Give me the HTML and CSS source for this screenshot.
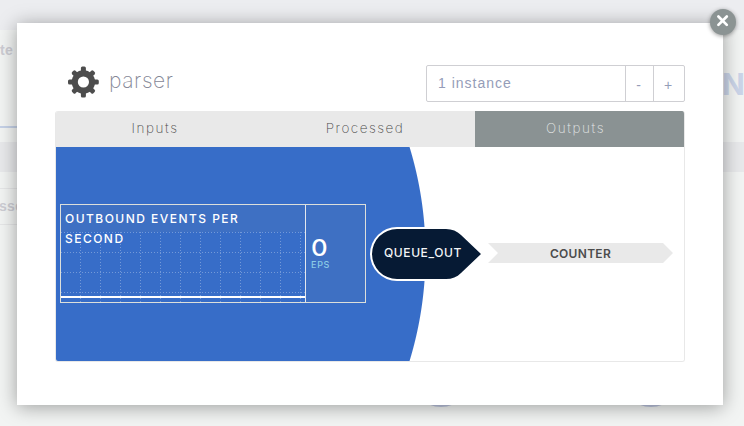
FILE: index.html
```
<!DOCTYPE html>
<html lang="en">
<head>
<meta charset="utf-8">
<title>parser</title>
<link rel="stylesheet" href="styles.css">
</head>
<body>
<div class="backdrop" aria-hidden="true">
  <div class="back-top"></div>
  <div class="back-row back-summary"><span class="back-label">te</span><span class="back-name">N</span></div>
  <div class="back-bar"></div>
  <div class="back-row back-search"><span class="back-label">sse</span></div>
  <div class="back-canvas"><i class="back-node"></i><i class="back-node"></i></div>
</div>
<main class="modal">
  <button class="close" aria-label="Close"><svg viewBox="0 0 26 26"><path d="M8.4 7.5l8.4 8.4M16.8 7.5l-8.4 8.4"/></svg></button>
  <header class="header">
    <svg class="gear" viewBox="-16.4 -16 32 32">
      <g>
        <rect x="-2.5" y="-15.4" width="5" height="30.8" rx="1.5"/>
        <rect x="-15.4" y="-2.5" width="30.8" height="5" rx="1.5"/>
        <rect x="-2.4" y="-15" width="4.8" height="30" rx="1.5" transform="rotate(45)"/>
        <rect x="-2.4" y="-15" width="4.8" height="30" rx="1.5" transform="rotate(-45)"/>
      </g>
      <circle r="11.7"/>
      <circle class="hole" r="5.6"/>
    </svg>
    <h1 class="title">parser</h1>
    <div class="stepper"><div class="count">1 instance</div><button>-</button><button>+</button></div>
  </header>
  <section class="panel">
    <nav class="tabs"><a class="tab">Inputs</a><a class="tab">Processed</a><a class="tab active">Outputs</a></nav>
    <div class="content">
      <div class="metric">
        <div class="chart">
          <svg class="grid" viewBox="0 0 244 70">
            <path class="dots" d="M0 .5H244M0 20.5H244M0 40.5H244M0 60.5H244M19.5 0V70M39.5 0V70M59.5 0V70M79.5 0V70M99.5 0V70M119.5 0V70M139.5 0V70M159.5 0V70M179.5 0V70M199.5 0V70M219.5 0V70M239.5 0V70"/>
            <path class="series" d="M0 65H244"/>
          </svg>
          <h2 class="metric-title">OUTBOUND EVENTS PER SECOND</h2>
        </div>
        <div class="reading"><span class="value">0</span><span class="unit">EPS</span></div>
      </div>
      <div class="queue">
        <svg class="queue-shape" viewBox="0 0 112 54"><path class="halo" d="M27 0H78C84 0 88 2 92 6L112 27L92 48C88 52 84 54 78 54H27A27 27 0 0 1 27 0Z"/><path class="fill" d="M27 2H76C82 2 87 4 91 8L111 27L91 46C87 50 82 52 76 52H27A25 25 0 0 1 27 2Z"/></svg>
        <span class="queue-name">QUEUE_OUT</span>
      </div>
      <div class="target">COUNTER</div>
    </div>
  </section>
</main>
</body>
</html>
```
FILE: styles.css
```
* { box-sizing: border-box; }
body {
  margin: 0;
  width: 744px;
  height: 426px;
  overflow: hidden;
  position: relative;
  padding: 23px 21px 21px 17px;
  font-family: Inter, sans-serif;
  background: #f2f4f3;
}
button { font: inherit; border: 0; background: none; padding: 0; margin: 0; }
.backdrop { position: absolute; inset: 0; display: flex; flex-direction: column; overflow: hidden; }
.back-top { height: 30px; background: #ecedf0; }
.back-row { display: flex; justify-content: space-between; }
.back-summary { height: 112px; position: relative; }
.back-summary::before { content: ""; position: absolute; left: 0; top: 96px; width: 30px; height: 2px; background: #c5d1e7; }
.back-label { font: 700 14px/20px "Liberation Sans", sans-serif; color: #cdcdd3; padding-top: 10px; letter-spacing: .3px; }
.back-name { font: 700 30px/36px Inter, sans-serif; color: #cbd5e9; width: 22px; padding-top: 36px; }
.back-bar { height: 30px; background: #e8e9eb; }
.back-search {
  height: 53px;
  background: linear-gradient(#e5e6e7, #e5e6e7) 0 16px / 30px 1px no-repeat, linear-gradient(#e5e6e7, #e5e6e7) 0 52px / 30px 1px no-repeat;
}
.back-search .back-label { padding-top: 24px; margin-left: -1px; }
.back-canvas { flex: 1; display: flex; justify-content: flex-end; gap: 150px; padding: 122px 63px 0 0; }
.back-node { width: 60px; height: 60px; border-radius: 50%; background: #bdc5df; flex: none; }
.modal {
  position: relative;
  width: 706px;
  height: 382px;
  background: #fff;
  padding: 42px 38px 0;
  box-shadow: 0 2px 18px rgba(0, 0, 0, .36);
}
.close {
  position: absolute;
  top: -14px;
  right: -13px;
  width: 26px;
  height: 26px;
  border-radius: 50%;
  background: #8b9393;
  box-shadow: 0 1px 4px rgba(0, 0, 0, .4);
}
.close svg { display: block; width: 26px; height: 26px; fill: none; stroke: #fff; stroke-width: 2.7; stroke-linecap: round; }
.header { display: flex; height: 37px; margin-bottom: 9px; padding-left: 12px; }
.gear { width: 32px; height: 32px; margin-top: 1px; fill: #4d4d4d; }
.gear .hole { fill: #fff; }
.title { margin: 0 0 0 10px; flex: 1; font-weight: 200; font-size: 21px; line-height: 31px; letter-spacing: .6px; color: #858796; }
.stepper {
  display: flex;
  width: 259px;
  height: 37px;
  border: 1px solid #cfcfd3;
  border-radius: 2px;
  color: #959db8;
  font: 14px/35px "Liberation Sans", sans-serif;
}
.count { width: 198px; padding-left: 11px; letter-spacing: 1px; }
.stepper button { width: 28px; border-left: 1px solid #cfcfd3; color: inherit; padding: 2px 2px 0 0; }
.stepper button:last-child { width: 31px; }
.panel { width: 630px; height: 251px; border: 1px solid #e8e8e8; border-top: 0; border-radius: 3px; overflow: hidden; }
.tabs { display: flex; height: 36px; margin: 0 -1px; background: #e9e9e9; }
.tab { width: 210px; flex: none; text-align: center; font: 200 13.5px/35px Inter, sans-serif; letter-spacing: 1.6px; color: #4c4c4c; padding-right: 10px; }
.tab:nth-child(2) { letter-spacing: 1.5px; padding-right: 10px; }
.tab.active { background: #8a9293; color: #e3e6e6; padding-right: 9px; }
.content {
  display: flex;
  align-items: center;
  height: 214px;
  padding-left: 4px;
  background: radial-gradient(circle at 3px 107px, #376dc8 366px, #fff 367px);
}
.metric { display: flex; width: 306px; height: 99px; margin-top: -1px; border: 1px solid #dcdfdb; flex: none; background: #3e70c3; }
.chart { width: 244px; display: flex; flex-direction: column; position: relative; padding-top: 27px; }
.grid { width: 244px; height: 70px; display: block; background: #376dc8; }
.dots { stroke: #7399d8; stroke-dasharray: 1 2; fill: none; }
.series { stroke: #fff; stroke-width: 2; fill: none; }
.metric-title { position: absolute; left: 4px; top: 4px; width: 200px; margin: 0; font: 500 12px/20px Inter, sans-serif; letter-spacing: 1.47px; color: #fff; }
.reading { flex: 1; display: flex; flex-direction: column; border-left: 1px solid #e4e8ee; padding: 29px 0 0 5px; color: #fff; }
.value { font: 500 23px/28px Inter, sans-serif; transform: scaleX(1.12); transform-origin: 0 50%; }
.unit { font: 500 9px/10px Inter, sans-serif; color: #8bcbe6; letter-spacing: .7px; margin-top: -2px; }
.queue { position: relative; width: 112px; height: 54px; margin-left: 4px; flex: none; }
.queue-shape { display: block; width: 112px; height: 54px; }
.halo { fill: #fff; }
.queue .fill { fill: #061a34; }
.queue-name { position: absolute; left: 14px; top: 17px; font: 500 12px/18px Inter, sans-serif; letter-spacing: .6px; color: #f3f5f7; }
.target {
  width: 185px;
  height: 20px;
  margin: -2px 0 0 6px;
  background: #e9e9e9;
  clip-path: polygon(0 0, 175px 0, 100% 50%, 175px 100%, 0 100%, 10px 50%);
  text-align: center;
  color: #4c4c4c;
  font: 600 12px/21px Inter, sans-serif;
  letter-spacing: .3px;
}
```
